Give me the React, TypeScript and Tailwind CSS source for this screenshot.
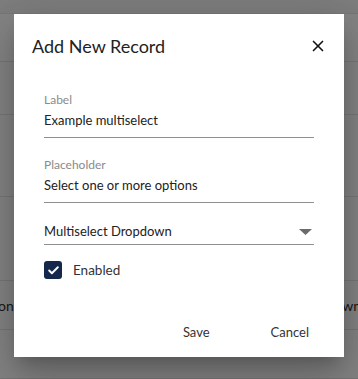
import { X, Check } from "lucide-react";

const rows = [
  { h: "h-[48px]", text: "" },
  { h: "h-[53px]", text: "" },
  { h: "h-[82px]", text: "" },
  { h: "h-[84px]", text: "" },
  { h: "h-[49px]", text: "on" },
  { h: "h-[49px]", text: "" },
];

function Field({ label, value }: { label: string; value: string }) {
  return (
    <div className="flex flex-col">
      <span className="text-[12px] leading-[16px] text-[#8a8a8a]">{label}</span>
      <span className="mt-[2px] border-b border-[#8f8f8f] pb-[7px] text-[13px] leading-[20px] text-[#222]">
        {value}
      </span>
    </div>
  );
}

export default function App() {
  return (
    <div
      className="relative h-[379px] w-[358px] overflow-hidden bg-white"
      style={{ fontFamily: "Lato, 'Open Sans', sans-serif" }}
    >
      {/* page behind the modal */}
      <div className="flex flex-col">
        <div className="h-[14px] border-b border-[#e6e6e6] bg-[#f2f2f2]" />
        {rows.map((r, i) => (
          <div
            key={i}
            className={`${r.h} flex items-center justify-between border-b border-[#e6e6e6] text-[14px] text-[#333]`}
          >
            <span className="-ml-[2px]">{r.text}</span>
            <span className="-mr-[3px]">{r.text ? "wn" : ""}</span>
          </div>
        ))}
      </div>

      {/* overlay */}
      <div className="absolute inset-0 bg-black/[0.48]" />

      {/* dialog */}
      <div className="absolute left-[14px] top-[14px] flex h-[343px] w-[330px] flex-col bg-white shadow-[0_11px_15px_-7px_rgba(0,0,0,0.2),0_24px_38px_3px_rgba(0,0,0,0.14),0_9px_46px_8px_rgba(0,0,0,0.12)]">
        <div className="flex items-center justify-between pl-[18px] pr-[17px] pt-[19px]">
          <h2 className="text-[18px] leading-[26px] text-[#222]">Add New Record</h2>
          <X className="h-[18px] w-[18px] text-[#111]" strokeWidth={2.2} />
        </div>

        <div className="mt-[33px] flex flex-col gap-[19px] px-[30px]">
          <Field label="Label" value="Example multiselect" />
          <Field label="Placeholder" value="Select one or more options" />
          <div className="flex items-center justify-between border-b border-[#8f8f8f] pb-[3px]">
            <span className="-mt-[1px] text-[13px] leading-[20px] text-[#222]">Multiselect Dropdown</span>
            <svg width="13" height="6" viewBox="0 0 13 6" className="mr-[2px]">
              <path d="M0 0h13L6.5 6z" fill="#6b6b6b" />
            </svg>
          </div>
          <label className="-mt-[4px] flex items-center gap-[11px]">
            <span className="flex h-[18px] w-[18px] items-center justify-center rounded-[3px] bg-[#13284a]">
              <Check className="h-[13px] w-[13px] text-white" strokeWidth={3.5} />
            </span>
            <span className="text-[13.5px] leading-[20px] text-[#333]">Enabled</span>
          </label>
        </div>

        <div className="mt-auto flex justify-end gap-[61px] pb-[15px] pr-[35px] text-[13px] text-[#333]">
          <button className="leading-[20px]">Save</button>
          <button className="leading-[20px]">Cancel</button>
        </div>
      </div>
    </div>
  );
}
